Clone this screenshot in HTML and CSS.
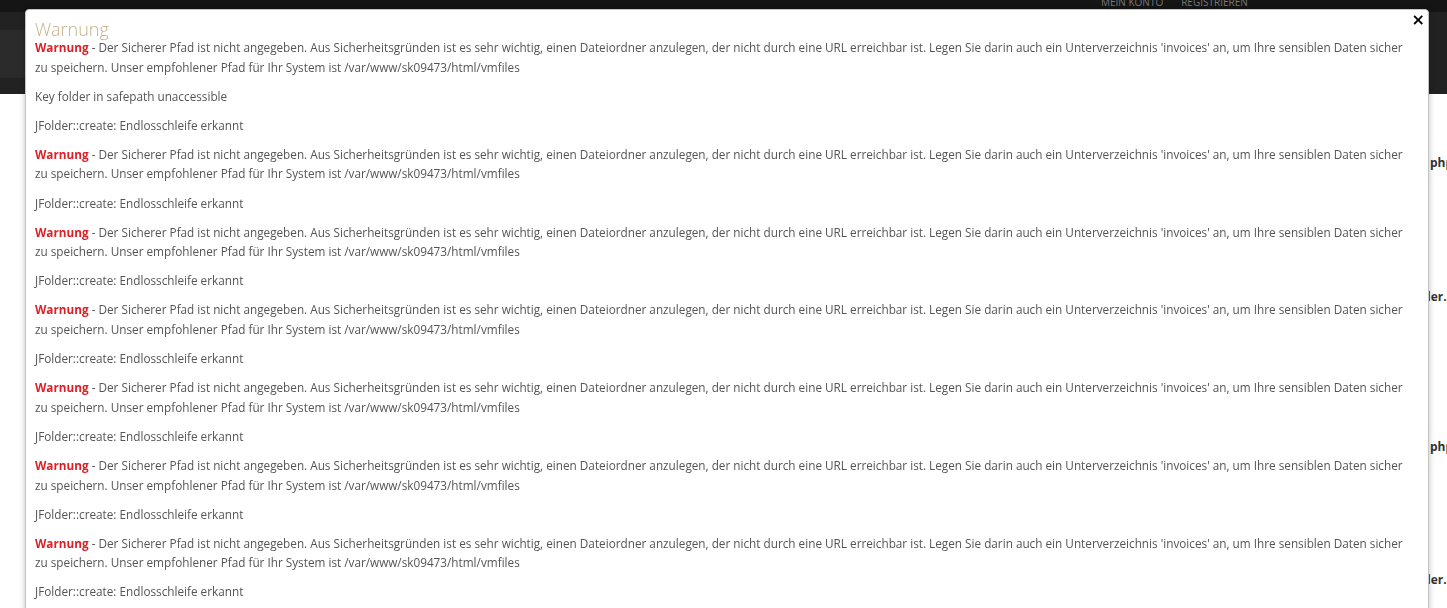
FILE: index.html
```html
<!DOCTYPE html>
<html lang="de">
<head>
    <meta charset="UTF-8">
    <title>Warnung</title>
    <link rel="stylesheet" href="styles.css">
</head>
<body>
    <div class="topbar">
        <nav class="top-nav">
            <a href="#">MEIN KONTO</a>
            <a href="#">REGISTRIEREN</a>
        </nav>
    </div>
    <div class="header">
        <div class="header-band"></div>
    </div>

    <div class="page">
        <div class="page-row r1"><b>php</b></div>
        <div class="page-row r2"><b>ler.<span>p</span></b></div>
        <div class="page-row r3"><b>php</b></div>
        <div class="page-row r4"><b>ler.<span>p</span></b></div>
    </div>

    <div class="modal">
        <a class="modal-close" href="#">&times;</a>
        <h3 class="modal-title">Warnung</h3>
        <div class="modal-body">
            <p class="msg"><strong>Warnung</strong> - Der Sicherer Pfad ist nicht angegeben. Aus Sicherheitsgründen ist es sehr wichtig, einen Dateiordner anzulegen, der nicht durch eine URL erreichbar ist. Legen Sie darin auch ein Unterverzeichnis 'invoices' an, um Ihre sensiblen Daten sicher zu speichern. Unser empfohlener Pfad für Ihr System ist /var/www/sk09473/html/vmfiles</p>
            <p class="msg">Key folder in safepath unaccessible</p>
            <p class="msg">JFolder::create: Endlosschleife erkannt</p>
            <p class="msg"><strong>Warnung</strong> - Der Sicherer Pfad ist nicht angegeben. Aus Sicherheitsgründen ist es sehr wichtig, einen Dateiordner anzulegen, der nicht durch eine URL erreichbar ist. Legen Sie darin auch ein Unterverzeichnis 'invoices' an, um Ihre sensiblen Daten sicher zu speichern. Unser empfohlener Pfad für Ihr System ist /var/www/sk09473/html/vmfiles</p>
            <p class="msg">JFolder::create: Endlosschleife erkannt</p>
            <p class="msg"><strong>Warnung</strong> - Der Sicherer Pfad ist nicht angegeben. Aus Sicherheitsgründen ist es sehr wichtig, einen Dateiordner anzulegen, der nicht durch eine URL erreichbar ist. Legen Sie darin auch ein Unterverzeichnis 'invoices' an, um Ihre sensiblen Daten sicher zu speichern. Unser empfohlener Pfad für Ihr System ist /var/www/sk09473/html/vmfiles</p>
            <p class="msg">JFolder::create: Endlosschleife erkannt</p>
            <p class="msg"><strong>Warnung</strong> - Der Sicherer Pfad ist nicht angegeben. Aus Sicherheitsgründen ist es sehr wichtig, einen Dateiordner anzulegen, der nicht durch eine URL erreichbar ist. Legen Sie darin auch ein Unterverzeichnis 'invoices' an, um Ihre sensiblen Daten sicher zu speichern. Unser empfohlener Pfad für Ihr System ist /var/www/sk09473/html/vmfiles</p>
            <p class="msg">JFolder::create: Endlosschleife erkannt</p>
            <p class="msg"><strong>Warnung</strong> - Der Sicherer Pfad ist nicht angegeben. Aus Sicherheitsgründen ist es sehr wichtig, einen Dateiordner anzulegen, der nicht durch eine URL erreichbar ist. Legen Sie darin auch ein Unterverzeichnis 'invoices' an, um Ihre sensiblen Daten sicher zu speichern. Unser empfohlener Pfad für Ihr System ist /var/www/sk09473/html/vmfiles</p>
            <p class="msg">JFolder::create: Endlosschleife erkannt</p>
            <p class="msg"><strong>Warnung</strong> - Der Sicherer Pfad ist nicht angegeben. Aus Sicherheitsgründen ist es sehr wichtig, einen Dateiordner anzulegen, der nicht durch eine URL erreichbar ist. Legen Sie darin auch ein Unterverzeichnis 'invoices' an, um Ihre sensiblen Daten sicher zu speichern. Unser empfohlener Pfad für Ihr System ist /var/www/sk09473/html/vmfiles</p>
            <p class="msg">JFolder::create: Endlosschleife erkannt</p>
            <p class="msg"><strong>Warnung</strong> - Der Sicherer Pfad ist nicht angegeben. Aus Sicherheitsgründen ist es sehr wichtig, einen Dateiordner anzulegen, der nicht durch eine URL erreichbar ist. Legen Sie darin auch ein Unterverzeichnis 'invoices' an, um Ihre sensiblen Daten sicher zu speichern. Unser empfohlener Pfad für Ihr System ist /var/www/sk09473/html/vmfiles</p>
            <p class="msg">JFolder::create: Endlosschleife erkannt</p>
            <p class="msg"><strong>Warnung</strong> - Der Sicherer Pfad ist nicht angegeben. Aus Sicherheitsgründen ist es sehr wichtig, einen Dateiordner anzulegen, der nicht durch eine URL erreichbar ist. Legen Sie darin auch ein Unterverzeichnis 'invoices' an, um Ihre sensiblen Daten sicher zu speichern. Unser empfohlener Pfad für Ihr System ist /var/www/sk09473/html/vmfiles</p>
        </div>
    </div>
</body>
</html>
```

FILE: styles.css
```css
* {
    margin: 0;
    padding: 0;
    box-sizing: border-box;
}

html, body {
    height: 100%;
    overflow: hidden;
}

body {
    font-family: 'Open Sans', 'Liberation Sans', Arial, sans-serif;
    background: #ffffff;
    color: #555555;
}

/* 页面背景 */
.topbar {
    height: 12px;
    background: #151515;
    overflow: hidden;
}

.top-nav {
    display: flex;
    gap: 18px;
    padding-left: 1101px;
    margin-top: -5px;
}

.top-nav a {
    font-size: 10px;
    line-height: 14px;
    color: #7a7a7a;
    text-decoration: none;
}

.header {
    height: 82px;
    background: #222222;
    padding-top: 18px;
}

.header-band {
    width: 1300px;
    height: 48px;
    background: #2b2b2b;
}

.page {
    padding-left: 1430px;
    white-space: nowrap;
}

.page-row {
    font-size: 12px;
    color: #333333;
    line-height: 18px;
}

.page-row span {
    color: #d9a55a;
}

.page-row.r1 { margin-top: 60px; }
.page-row.r2 { margin-top: 116px; margin-left: -3px; }
.page-row.r3 { margin-top: 132px; }
.page-row.r4 { margin-top: 115px; margin-left: -3px; }

/* 弹窗 */
.modal {
    position: fixed;
    left: 25px;
    top: 9px;
    width: 1404px;
    height: 640px;
    background: #ffffff;
    border: 1px solid #c4c4c4;
    border-radius: 4px;
    box-shadow: 0 0 6px rgba(0,0,0,0.25);
    padding: 7px 16px 0 9px;
}

.modal-close {
    position: absolute;
    top: 0;
    right: 3px;
    font-family: 'DejaVu Sans', sans-serif;
    font-size: 16px;
    font-weight: bold;
    color: #000000;
    text-decoration: none;
}

.modal-title {
    font-size: 18px;
    font-weight: 300;
    line-height: 24px;
    color: #c7b08c;
}

.modal-body {
    margin-top: -3px;
}

.msg {
    font-size: 11.75px;
    line-height: 19.6px;
    margin-bottom: 9.5px;
}

.msg strong {
    color: #dd1f26;
    font-weight: bold;
}
```
